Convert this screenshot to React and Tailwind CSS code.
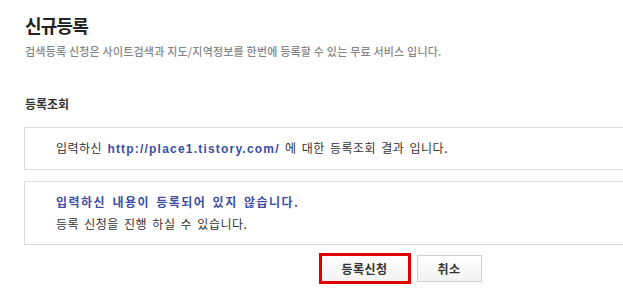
export default function App() {
  const font = { fontFamily: '"Noto Sans CJK KR", "Noto Sans", sans-serif' };
  return (
    <div className="w-[623px] h-[302px] overflow-hidden bg-white" style={font}>
      <div className="w-[752px] ml-[24px] pt-[13px]">
        <h1 className="text-[18px] leading-[24px] font-bold tracking-[-0.8px] text-[#222] pl-[1px]">신규등록</h1>
        <p className="mt-[6px] text-[11px] leading-[16px] font-medium tracking-[0.2px] text-[#858585] pl-[1px]">
          검색등록 신청은 사이트검색과 지도/지역정보를 한번에 등록할 수 있는 무료 서비스 입니다.
        </p>
        <h2 className="mt-[37px] text-[12px] leading-[16px] font-bold text-[#333] pl-[1px]">등록조회</h2>
        <div className="mt-[15px] h-[43px] border border-[#dcdcdc] flex items-center pl-[31px] text-[12px] tracking-[0.5px] [word-spacing:2px] text-[#333]">
          <span>
            입력하신{" "}
            <span
              className="font-bold text-[#3c4da5] tracking-[1.2px] [word-spacing:0px]"
              style={{ fontFamily: '"Liberation Sans", "Noto Sans CJK KR", sans-serif' }}
            >
              http://place1.tistory.com/
            </span>{" "}
            에 대한 등록조회 결과 입니다.
          </span>
        </div>
        <div className="mt-[11px] h-[64px] border border-[#dcdcdc] pl-[31px] pt-[9px] text-[12px] leading-[22px] text-[#333] [word-spacing:2px]">
          <div className="font-bold text-[#3c4da5] tracking-[1.5px]">입력하신 내용이 등록되어 있지 않습니다.</div>
          <div className="tracking-[0.5px]">등록 신청을 진행 하실 수 있습니다.</div>
        </div>
        <div className="mt-[8px] flex justify-center items-center gap-[6px]">
          <button className="w-[92px] h-[31px] border-[3px] border-[#e00000] bg-gradient-to-b from-white to-[#f2f2f2] text-[12px] font-bold tracking-[0.5px] text-[#333]">
            등록신청
          </button>
          <button className="w-[65px] h-[27px] border border-[#cfcfcf] bg-gradient-to-b from-white to-[#f2f2f2] text-[12px] font-bold tracking-[0.5px] text-[#333]">
            취소
          </button>
        </div>
      </div>
    </div>
  );
}
